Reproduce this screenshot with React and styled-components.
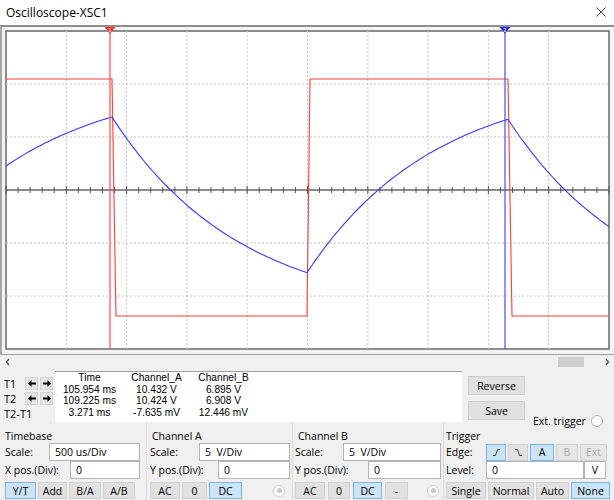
import React from 'react';
import styled, { createGlobalStyle } from 'styled-components';

const GlobalStyle = createGlobalStyle`
  html, body { margin: 0; padding: 0; background: #f0f0f0; }
  body { font-family: "Open Sans", "Liberation Sans", sans-serif; }
  * { box-sizing: border-box; }
`;

const Window = styled.div`
  width: 614px;
  height: 500px;
  overflow: hidden;
  background: #f0f0f0;
  color: #000;
  font-size: 10.5px;
`;

const TitleBar = styled.div`
  height: 25px;
  background: #fff;
  display: flex;
  align-items: center;
  justify-content: space-between;
  padding: 0 8px 1px 6px;
  font-size: 12px;
`;

const ScopeFrame = styled.div`
  border-top: 2px solid #8e8e8e;
  border-left: 2px solid #a8a8a8;
  background: #f4f4f4;
  svg { display: block; }
`;

const ScrollBar = styled.div`
  height: 15px;
  border-top: 1px solid #a0a0a0;
  display: flex;
  align-items: center;
  padding: 0 4px 0 5px;
`;

const Track = styled.div`
  flex: 1;
  height: 100%;
  display: flex;
  align-items: center;
`;

const Thumb = styled.div`
  width: 26px;
  height: 10px;
  background: #cdcdcd;
  margin-left: ${p => p.$offset}px;
`;

const Readout = styled.div`
  height: 53px;
  display: flex;
`;

const CursorCol = styled.div`
  width: 55px;
  padding: 7px 0 0 4px;
  display: flex;
  flex-direction: column;
  font-size: 11px;
`;

const CursorRow = styled.div`
  height: ${p => p.$h}px;
  display: flex;
  align-items: center;
  gap: 2px;
  line-height: 13px;
`;

const CursorName = styled.span`
  width: ${p => (p.$auto ? 'auto' : '19px')};
`;

const ArrowBtn = styled.div`
  width: 13px;
  height: 13px;
  background: #e6e6e6;
  border: 1px solid #d4d4d4;
  display: flex;
  align-items: center;
  justify-content: center;
`;

const Table = styled.div`
  width: 407px;
  margin-top: 2px;
  height: 51px;
  background: #fff;
  border-top: 1px solid #a0a0a0;
  display: grid;
  grid-template-columns: 67px 67px 67px;
  grid-auto-rows: 11.5px;
  font-family: "Liberation Sans", Arial, sans-serif;
  font-size: 10.2px;
  line-height: 11.5px;
  padding-left: 1px;
  div { text-align: center; white-space: nowrap; }
`;

const SideCol = styled.div`
  flex: 1;
  padding: 7px 0 0 6px;
  display: flex;
  flex-direction: column;
  gap: 6px;
`;

const SideRow = styled.div`
  display: flex;
  align-items: flex-end;
`;

const PushBtn = styled.div`
  width: 57px;
  height: 19px;
  background: #e1e1e1;
  border: 1px solid #cfcfcf;
  display: flex;
  align-items: center;
  justify-content: center;
  font-size: 10.5px;
`;

const ExtTrigger = styled.div`
  display: flex;
  align-items: center;
  gap: 5px;
  margin: 0 0 -8px 8px;
`;

const Controls = styled.div`
  display: flex;
  height: 78px;
`;

const Group = styled.div`
  width: ${p => p.$w}px;
  padding: 7px 0 0 ${p => p.$pl}px;
  border-left: ${p => (p.$sep ? '1px solid #dadada' : 'none')};
  display: flex;
  flex-direction: column;
`;

const GroupTitle = styled.div`
  height: 14px;
  line-height: 14px;
  margin-left: ${p => p.$indent || 0}px;
`;

const Field = styled.div`
  height: 18px;
  display: flex;
  align-items: center;
`;

const Label = styled.div`
  width: ${p => p.$w}px;
  white-space: nowrap;
`;

const Input = styled.div`
  width: ${p => p.$w}px;
  height: 18px;
  background: #fff;
  border: 1px solid #b4b4b4;
  padding-left: ${p => (p.$center ? 0 : 5)}px;
  display: flex;
  align-items: center;
  justify-content: ${p => (p.$center ? 'center' : 'flex-start')};
  white-space: pre;
`;

const BtnRow = styled.div`
  height: 17px;
  margin-top: ${p => (p.$inline ? 0 : 3)}px;
  display: flex;
  align-items: center;
  gap: ${p => p.$gap}px;
  padding-right: ${p => p.$pr || 0}px;
`;

const Btn = styled.div`
  width: ${p => p.$w}px;
  height: 17px;
  background: ${p => (p.$active ? '#cce4f7' : p.$disabled ? '#e6e6e6' : '#e1e1e1')};
  border: 1px solid ${p => (p.$active ? '#7db3e6' : '#d0d0d0')};
  color: ${p => (p.$disabled ? '#a8a8a8' : '#000')};
  display: flex;
  align-items: center;
  justify-content: center;
  flex: none;
`;

const Radio = styled.div`
  width: 12px;
  height: 12px;
  border-radius: 50%;
  border: 1px solid ${p => (p.$dot ? '#cfcfcf' : '#b0b0b0')};
  background: #fff;
  margin-left: auto;
  display: flex;
  align-items: center;
  justify-content: center;
  flex: none;
  &::after {
    content: '';
    display: ${p => (p.$dot ? 'block' : 'none')};
    width: 5px;
    height: 5px;
    border-radius: 50%;
    background: #c8c8c8;
  }
`;

const X0 = 6, X1 = 609, Y0 = 31, Y1 = 349, YC = 190;
const DX = (X1 - X0) / 10;
const DY = (Y1 - Y0) / 6;

function blueY(x) {
  const tau = 128;
  if (x <= 112) return 79 + 38 * Math.exp((112 - x) / tau);
  if (x <= 307) return 316 - 199 * Math.exp(-(x - 112) / tau);
  const y3 = 316 - 199 * Math.exp(-195 / tau);
  if (x <= 508) return 79 + (y3 - 79) * Math.exp(-(x - 307) / tau);
  const y4 = 79 + (y3 - 79) * Math.exp(-201 / tau);
  return 316 - (316 - y4) * Math.exp(-(x - 508) / tau);
}

function bluePath() {
  const xs = [];
  for (let x = X0; x <= X1; x += 3) xs.push(x);
  xs.push(112, 307, 508, X1);
  xs.sort((a, b) => a - b);
  return xs.map((x, i) => `${i ? 'L' : 'M'}${x.toFixed(1)} ${blueY(x).toFixed(1)}`).join(' ');
}

const redPath = 'M6 79 L112 79 L116 316 L307 316 L310 79 L508 79 L512 316 L609 316';

function Scope() {
  const vgrid = [];
  for (let i = 1; i < 10; i++) vgrid.push(X0 + i * DX);
  const hgrid = [1, 2, 4, 5].map(i => Y0 + i * DY);
  const ticks = [];
  for (let i = 0; i <= 50; i++) {
    const x = X0 + (i * DX) / 5;
    const l = i % 5 === 0 ? 4 : 3;
    ticks.push(<line key={i} x1={x} x2={x} y1={YC - l} y2={YC + l} stroke="#555" strokeWidth="1" />);
  }
  return (
    <svg width="612" height="327" viewBox="2 27 612 327">
      <defs>
        <clipPath id="plot">
          <rect x={X0} y={Y0} width={X1 - X0} height={Y1 - Y0} />
        </clipPath>
      </defs>
      <rect x={X0} y={Y0} width={X1 - X0} height={Y1 - Y0} fill="#fff" stroke="#6a6a6a" strokeWidth="1.5" />
      {vgrid.map(x => (
        <line key={x} x1={x} x2={x} y1={Y0} y2={Y1} stroke="#c4c4c4" strokeDasharray="2 2" />
      ))}
      {hgrid.map(y => (
        <line key={y} x1={X0} x2={X1} y1={y} y2={y} stroke="#c4c4c4" strokeDasharray="2 2" />
      ))}
      <line x1={X0} x2={X1} y1={YC} y2={YC} stroke="#666" strokeWidth="1.5" />
      {ticks}
      <g clipPath="url(#plot)" fill="none" strokeWidth="1.1">
        <path d={redPath} stroke="#ff3b3b" />
        <path d={bluePath()} stroke="#3a3aff" />
      </g>
      <line x1="110" x2="110" y1="27" y2={Y1} stroke="#ff4a4a" strokeWidth="1.2" />
      <line x1="505" x2="505" y1="27" y2={Y1} stroke="#4a4aff" strokeWidth="1.2" />
      <polygon points="104.5,27 115.5,27 110,33.5" fill="#ff3030" />
      <polygon points="499.5,27 510.5,27 505,33.5" fill="#2828e8" />
      <text x="110" y="31.5" fontSize="5" fill="#fff" textAnchor="middle" fontFamily="Liberation Sans, sans-serif">1</text>
      <text x="505" y="31.5" fontSize="5" fill="#fff" textAnchor="middle" fontFamily="Liberation Sans, sans-serif">2</text>
    </svg>
  );
}

const Arrow = ({ dir }) => (
  <svg width="8" height="7" viewBox="0 0 8 7">
    {dir === 'left' ? (
      <path d="M0 3.5 L3.5 0 V2.5 H8 V4.5 H3.5 V7 Z" fill="#000" />
    ) : (
      <path d="M8 3.5 L4.5 0 V2.5 H0 V4.5 H4.5 V7 Z" fill="#000" />
    )}
  </svg>
);

const Chevron = ({ dir }) => (
  <svg width="6" height="8" viewBox="0 0 6 8">
    <polyline points={dir === 'left' ? '4,1 1.5,4 4,7' : '2,1 4.5,4 2,7'} fill="none" stroke="#555" strokeWidth="1.3" />
  </svg>
);

const Edge = ({ rising }) => (
  <svg width="9" height="9" viewBox="0 0 9 9">
    <path d={rising ? 'M1 7.5 H3.5 L5.5 1.5 H8' : 'M1 1.5 H3.5 L5.5 7.5 H8'} fill="none" stroke="#333" strokeWidth="0.9" />
  </svg>
);

export default function App() {
  return (
    <Window>
      <GlobalStyle />
      <TitleBar>
        <span>Oscilloscope-XSC1</span>
        <svg width="10" height="10" viewBox="0 0 10 10">
          <path d="M0.5 0.5 L9.5 9.5 M9.5 0.5 L0.5 9.5" stroke="#444" strokeWidth="1" />
        </svg>
      </TitleBar>
      <ScopeFrame>
        <Scope />
      </ScopeFrame>
      <ScrollBar>
        <Chevron dir="left" />
        <Track>
          <Thumb $offset={547} />
        </Track>
        <Chevron dir="right" />
      </ScrollBar>
      <Readout>
        <CursorCol>
          <CursorRow $h={15}>
            <CursorName>T1</CursorName>
            <ArrowBtn><Arrow dir="left" /></ArrowBtn>
            <ArrowBtn><Arrow dir="right" /></ArrowBtn>
          </CursorRow>
          <CursorRow $h={15}>
            <CursorName>T2</CursorName>
            <ArrowBtn><Arrow dir="left" /></ArrowBtn>
            <ArrowBtn><Arrow dir="right" /></ArrowBtn>
          </CursorRow>
          <CursorRow $h={14}>
            <CursorName $auto>T2-T1</CursorName>
          </CursorRow>
        </CursorCol>
        <Table>
          <div>Time</div><div>Channel_A</div><div>Channel_B</div>
          <div>105.954 ms</div><div>10.432 V</div><div>6.895 V</div>
          <div>109.225 ms</div><div>10.424 V</div><div>6.908 V</div>
          <div>3.271 ms</div><div>-7.635 mV</div><div>12.446 mV</div>
        </Table>
        <SideCol>
          <PushBtn>Reverse</PushBtn>
          <SideRow>
            <PushBtn>Save</PushBtn>
            <ExtTrigger>
              <span>Ext. trigger</span>
              <Radio />
            </ExtTrigger>
          </SideRow>
        </SideCol>
      </Readout>
      <Controls>
        <Group $w={146} $pl={5}>
          <GroupTitle>Timebase</GroupTitle>
          <Field><Label $w={44}>Scale:</Label><Input $w={91}>500 us/Div</Input></Field>
          <Field><Label $w={65}>X pos.(Div):</Label><Input $w={70}>0</Input></Field>
          <BtnRow $gap={2}>
            <Btn $w={31} $active>Y/T</Btn>
            <Btn $w={29}>Add</Btn>
            <Btn $w={32}>B/A</Btn>
            <Btn $w={32}>A/B</Btn>
          </BtnRow>
        </Group>
        <Group $w={146} $pl={3} $sep>
          <GroupTitle $indent={2}>Channel A</GroupTitle>
          <Field><Label $w={49}>Scale:</Label><Input $w={91}>5  V/Div</Input></Field>
          <Field><Label $w={68}>Y pos.(Div):</Label><Input $w={72}>0</Input></Field>
          <BtnRow $gap={2} $pr={7}>
            <Btn $w={30}>AC</Btn>
            <Btn $w={25}>0</Btn>
            <Btn $w={33} $active>DC</Btn>
            <Radio $dot />
          </BtnRow>
        </Group>
        <Group $w={151} $pl={2} $sep>
          <GroupTitle $indent={3}>Channel B</GroupTitle>
          <Field><Label $w={48}>Scale:</Label><Input $w={98}>5  V/Div</Input></Field>
          <Field><Label $w={73}>Y pos.(Div):</Label><Input $w={73}>0</Input></Field>
          <BtnRow $gap={3} $pr={4}>
            <Btn $w={30}>AC</Btn>
            <Btn $w={22}>0</Btn>
            <Btn $w={29} $active>DC</Btn>
            <Btn $w={23}>-</Btn>
            <Radio $dot />
          </BtnRow>
        </Group>
        <Group $w={171} $pl={2} $sep>
          <GroupTitle>Trigger</GroupTitle>
          <Field>
            <Label $w={40}>Edge:</Label>
            <BtnRow $gap={2} $inline>
              <Btn $w={20} $active><Edge rising /></Btn>
              <Btn $w={20}><Edge /></Btn>
              <Btn $w={24} $active>A</Btn>
              <Btn $w={22} $disabled>B</Btn>
              <Btn $w={27} $disabled>Ext</Btn>
            </BtnRow>
          </Field>
          <Field>
            <Label $w={40}>Level:</Label>
            <Input $w={98}>0</Input>
            <Input $w={22} $center>V</Input>
          </Field>
          <BtnRow $gap={2}>
            <Btn $w={40}>Single</Btn>
            <Btn $w={46}>Normal</Btn>
            <Btn $w={33}>Auto</Btn>
            <Btn $w={39} $active>None</Btn>
          </BtnRow>
        </Group>
      </Controls>
    </Window>
  );
}
